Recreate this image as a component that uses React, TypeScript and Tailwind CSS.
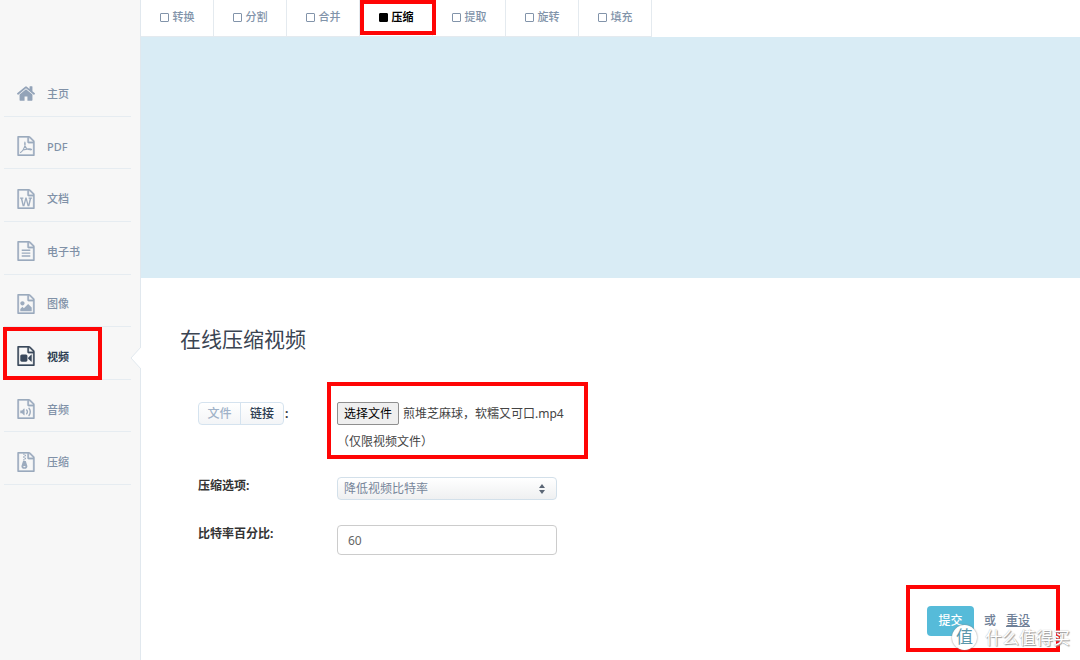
import { useRef, useState } from 'react';

const FILE_OUTLINE =
  'M1468 380q28 28 48 76t20 88v1152q0 40-28 68t-68 28H96q-40 0-68-28t-28-68V96q0-40 28-68T96 0h896q40 0 88 20t76 48zm-444-244v376h376q-10-29-22-41l-313-313q-12-12-41-22zm384 1528V640H992q-40 0-68-28t-28-68V128H128v1536h1280z';

const GLYPHS: Record<string, string> = {
  word: 'M233 768v107h70l164 661h159l128-485q7-20 10-46 2-16 2-24h4l3 24q1 3 3.5 20t5.5 26l128 485h159l164-661h70V768H1003v107h90l-99 438q-5 20-7 46l-2 21h-4q0-3-.5-6.5t-1.5-8-1-6.5q-1-5-4-21t-5-25L825 768H711l-144 545q-2 9-4.5 24.5T559 1359l-4 21h-4l-2-21q-2-26-7-46l-99-438h90V768H233z',
  text: 'M384 768h768v128H384zM384 1024h768v128H384zM384 1280h768v128H384z',
  image:
    'M1280 1216v320H256v-192l192-192 128 128 384-384zM448 1024q-80 0-136-56t-56-136 56-136 136-56 136 56 56 136-56 136-136 56z',
  video:
    'M768 768q52 0 90 38t38 90v384q0 52-38 90t-90 38H384q-52 0-90-38t-38-90V896q0-52 38-90t90-38h384zm492 2q20 8 20 30v576q0 22-20 30-8 2-12 2-14 0-23-9l-265-266v-90l265-266q9-9 23-9 4 0 12 2z',
  audio:
    'M620 850q20 8 20 30v544q0 22-20 30-8 2-12 2-12 0-23-9l-166-167H288q-14 0-23-9t-9-23v-192q0-14 9-23t23-9h131l166-167q16-15 35-7zm417 689q31 0 50-24 129-159 129-363t-129-363q-16-21-43-24t-47 14q-21 17-23.5 43.5t14.5 47.5q100 123 100 282t-100 282q-17 21-14.5 47.5t23.5 42.5q18 15 40 15zm-211-148q27 0 47-20 87-93 87-219t-87-219q-18-19-45-20t-46 17-20 44.5 18 46.5q52 57 52 131t-52 131q-19 20-18 46.5t20 44.5q20 17 44 17z',
  zip: 'M512 128h128v128H512zM640 256h128v128H640zM512 384h128v128H512zM640 512h128v128H640zM512 640h128v128H512zM500 800h250l140 450q15 70-35 150-75 110-230 110t-230-110q-50-80-35-150zM624 1256q-110 0-110 54t110 54 110-54-110-54z'
};

const NAV = [
  { icon: 'home', label: '主页' },
  { icon: 'pdf', label: 'PDF' },
  { icon: 'word', label: '文档' },
  { icon: 'text', label: '电子书' },
  { icon: 'image', label: '图像' },
  { icon: 'video', label: '视频' },
  { icon: 'audio', label: '音频' },
  { icon: 'zip', label: '压缩' }
];

const TABS = ['转换', '分割', '合并', '压缩', '提取', '旋转', '填充'];

export default function App() {
  const [tab, setTab] = useState<string>('压缩');
  const [source, setSource] = useState<string>('链接');
  const [fileName, setFileName] = useState<string>('煎堆芝麻球，软糯又可口.mp4');
  const [bitrate, setBitrate] = useState<string>('60');
  const fileInput = useRef<HTMLInputElement>(null);

  return (
    <div className="relative flex min-h-screen bg-white font-['Noto_Sans','Noto_Sans_CJK_SC',sans-serif] text-xs text-[#333b46]">
      <Sidebar />
      <main className="flex min-w-0 flex-1 flex-col">
        <div className="flex h-[37px] shrink-0">
          {TABS.map((name) => (
            <button
              key={name}
              type="button"
              onClick={() => setTab(name)}
              className={`relative flex w-[73px] items-center justify-center gap-1 border-r border-b border-[#e4eaef] pb-0.5 text-[11px] ${
                tab === name ? 'font-bold text-black' : 'font-medium text-[#8294aa]'
              }`}
            >
              <span
                className={`size-[9px] rounded-[1px] border border-current ${tab === name ? 'bg-black' : ''}`}
              />
              {name}
              {name === '压缩' && <Highlight className="left-0 -right-1 top-0 bottom-px" />}
            </button>
          ))}
        </div>
        <div className="h-[241px] shrink-0 bg-[#d9ecf5]" />

        <form className="flex flex-col pt-12 pr-8 pl-[39px]" onSubmit={(e) => e.preventDefault()}>
          <h1 className="text-[21px] leading-[26px] text-[#3a4452]">在线压缩视频</h1>

          <div className="mt-[50px] flex flex-col gap-[25px] pl-[18px]">
            <div className="flex">
              <div className="flex w-[139px] shrink-0 items-center self-start">
                <div className="flex h-[23px] rounded border border-[#d5e3ef] bg-linear-to-b from-white to-[#f3f5f7]">
                  {['文件', '链接'].map((name) => (
                    <button
                      key={name}
                      type="button"
                      onClick={() => setSource(name)}
                      className={`w-[42px] border-[#d5e3ef] font-medium first:border-r ${
                        source === name ? 'text-[#2c3c50]' : 'text-[#a0b2c8]'
                      }`}
                    >
                      {name}
                    </button>
                  ))}
                </div>
                <span className="ml-px font-bold">:</span>
              </div>
              <div className="relative">
                <div className="flex items-center gap-1">
                  <input
                    ref={fileInput}
                    type="file"
                    accept="video/*"
                    aria-label="选择文件"
                    className="hidden"
                    onChange={(e) => setFileName(e.target.files?.[0]?.name ?? fileName)}
                  />
                  <button
                    type="button"
                    onClick={() => fileInput.current?.click()}
                    className="h-[23px] w-[62px] rounded-xs border border-[#8f8f8f] bg-[#efefef] text-black"
                  >
                    选择文件
                  </button>
                  <span className="whitespace-nowrap text-[#444]">{fileName}</span>
                </div>
                <p className="mt-[7px] leading-5 text-[#444]">（仅限视频文件）</p>
                <Highlight className="-top-5 -right-6 -bottom-[7px] -left-[10px]" />
              </div>
            </div>

            <div className="flex items-start">
              <label htmlFor="option" className="w-[139px] shrink-0 font-bold leading-[18px] text-[#333]">
                压缩选项:
              </label>
              <div className="relative w-[220px]">
                <select
                  id="option"
                  className="block h-[23px] w-full appearance-none rounded border border-[#d3e0ea] bg-linear-to-b from-white to-[#eff0f1] pl-1.5 text-[#77869a]"
                >
                  <option>降低视频比特率</option>
                </select>
                <svg
                  viewBox="0 0 6 10"
                  className="pointer-events-none absolute top-[7px] right-3 h-[10px] w-[6px] fill-[#5b6675]"
                >
                  <path d="M3 0l3 4H0zM3 10L0 6h6z" />
                </svg>
              </div>
            </div>

            <div className="flex items-start">
              <label htmlFor="bitrate" className="w-[139px] shrink-0 font-bold leading-[18px] text-[#333]">
                比特率百分比:
              </label>
              <input
                id="bitrate"
                type="text"
                value={bitrate}
                onChange={(e) => setBitrate(e.target.value)}
                className="h-[30px] w-[220px] rounded border border-[#ccc] px-[10px] text-[#666]"
              />
            </div>
          </div>

          <div className="relative mt-[51px] flex items-center self-end pr-[18px]">
            <button type="submit" className="h-[30px] w-[47px] rounded bg-[#56bbd9] font-medium text-white">
              提交
            </button>
            <span className="ml-[10px] font-medium text-[#6f8097]">或</span>
            <button type="reset" className="ml-[10px] font-medium text-[#6f8097] underline">
              重设
            </button>
            <Highlight className="-top-[21px] -right-3 -bottom-4 -left-[21px]" />
          </div>
        </form>
      </main>
      <Watermark />
    </div>
  );
}

const Sidebar = () => {
  return (
    <aside className="w-[141px] shrink-0 border-r border-[#e1e8ee] bg-[#f7f7f7] pt-16">
      <nav className="grid h-[421px] auto-rows-fr pr-[9px] pl-1">
        {NAV.map(({ icon, label }) => (
          <a
            key={icon}
            href="#"
            className={`relative flex items-center gap-3 border-b border-[#e6ecf1] pt-[7px] pl-[13px] text-[11px] ${
              icon === 'video' ? 'font-bold text-[#2f3f54]' : 'font-medium text-[#8091a7]'
            }`}
          >
            <NavIcon name={icon} />
            <span className="pt-0.5">{label}</span>
            {icon === 'video' && (
              <>
                <Highlight className="top-0 -bottom-px -left-px right-[29px]" />
                <svg viewBox="0 0 11 22" className="absolute top-5 -right-[10px] h-[22px] w-[11px]">
                  <path d="M11 0v22L1 11z" fill="#fff" />
                  <path d="M11 0L1 11l10 11" fill="none" stroke="#e1e8ee" />
                </svg>
              </>
            )}
          </a>
        ))}
      </nav>
    </aside>
  );
};

const NavIcon = ({ name }: { name: string }) => {
  const color =
    name === 'video' ? 'fill-[#3a485b] stroke-[#3a485b]' : 'fill-[#9cabbe] stroke-[#9cabbe]';
  if (name === 'home') {
    return (
      <svg viewBox="26 253 1612 1283" className="h-[15px] w-[18px] shrink-0 fill-[#93a3b8]">
        <path d="M1408 992v480q0 26-19 45t-45 19H960v-384H704v384H320q-26 0-45-19t-19-45V992q0-1 .5-3t.5-3l575-474 575 474q1 2 1 6zm223-69l-62 74q-8 9-21 11h-3q-13 0-21-7L832 424 140 1001q-12 8-24 7-13-2-21-11l-62-74q-8-10-7-23.5T37 878l719-599q32-26 76-26t76 26l244 204V288q0-14 9-23t23-9h192q14 0 23 9t9 23v408l219 182q10 8 11 21.5t-7 23.5z" />
      </svg>
    );
  }
  return (
    <svg viewBox="0 0 1536 1792" className={`h-5 w-[18px] shrink-0 ${color}`}>
      <path d={FILE_OUTLINE} strokeWidth="30" />
      {name === 'pdf' ? (
        <path
          d="M240 1500q150-70 270-270 150-270 185-470 10-150-25-200-40 60-20 190 35 230 170 350 140 120 330 140 120 5 120-35-30-60-250-50-290 20-510 100"
          fill="none"
          strokeWidth="95"
        />
      ) : (
        <path d={GLYPHS[name]} fillRule="evenodd" stroke="none" />
      )}
    </svg>
  );
};

const Highlight = ({ className }: { className: string }) => (
  <span className={`pointer-events-none absolute border-4 border-[#ff0505] ${className}`} />
);

const Watermark = () => (
  <div className="pointer-events-none absolute right-[10px] bottom-[10px] flex items-center gap-2">
    <span className="flex size-[25px] items-center justify-center rounded-full bg-white text-[17px] text-[#5b97ab] shadow-[0_0_2px_#888]">
      值
    </span>
    <span className="text-[17px] leading-6 text-white [text-shadow:1px_1px_1px_#999,0_0_1px_#aaa]">
      什么值得买
    </span>
  </div>
);
